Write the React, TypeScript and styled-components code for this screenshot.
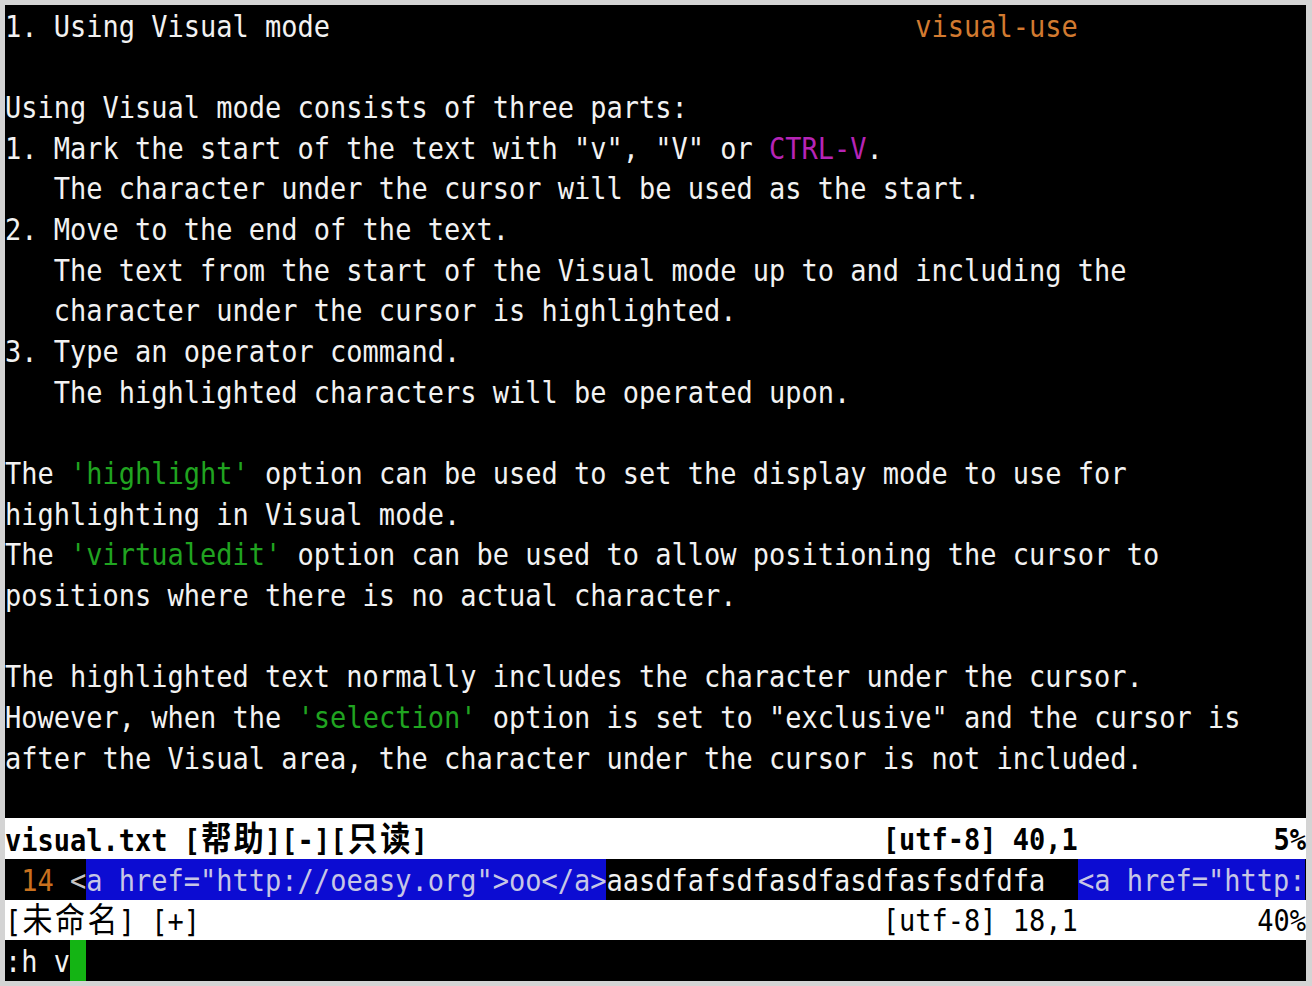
import React from "react";
import styled, { createGlobalStyle } from "styled-components";

type Tone = "plain" | "tag" | "key" | "opt" | "lnr" | "dim" | "vis";
type Seg = [string, Tone?];

const helpLines: Seg[][] = [
  [["1. Using Visual mode".padEnd(56)], ["visual-use", "tag"]],
  [],
  [["Using Visual mode consists of three parts:"]],
  [['1. Mark the start of the text with "v", "V" or '], ["CTRL-V", "key"], ["."]],
  [["   The character under the cursor will be used as the start."]],
  [["2. Move to the end of the text."]],
  [["   The text from the start of the Visual mode up to and including the"]],
  [["   character under the cursor is highlighted."]],
  [["3. Type an operator command."]],
  [["   The highlighted characters will be operated upon."]],
  [],
  [["The "], ["'highlight'", "opt"], [" option can be used to set the display mode to use for"]],
  [["highlighting in Visual mode."]],
  [["The "], ["'virtualedit'", "opt"], [" option can be used to allow positioning the cursor to"]],
  [["positions where there is no actual character."]],
  [],
  [["The highlighted text normally includes the character under the cursor."]],
  [["However, when the "], ["'selection'", "opt"], [' option is set to "exclusive" and the cursor is']],
  [["after the Visual area, the character under the cursor is not included."]],
  [],
];

const editLine: Seg[] = [
  [" 14 ", "lnr"],
  ["<", "dim"],
  ['a href="http://oeasy.org">oo</a>', "vis"],
  ["aasdfafsdfasdfasdfasfsdfdfa  "],
  ['<a href="http:', "vis"],
];

const GlobalStyle = createGlobalStyle`
  html, body {
    margin: 0;
    padding: 0;
    background: #d4d4d4;
  }
`;

const Frame = styled.div`
  width: 1312px;
  height: 986px;
  box-sizing: border-box;
  padding: 5px 6px 5px 5px;
  background: #d4d4d4;
`;

const Screen = styled.div`
  display: grid;
  grid-template-rows: repeat(24, 1fr);
  width: 1301px;
  height: 976px;
  background: #000;
  color: #f2f2f2;
  font-family: "DejaVu Sans Mono", "Noto Sans CJK SC", monospace;
  font-size: 27px;
`;

const Row = styled.div`
  display: flex;
  align-items: center;
  white-space: pre;
  overflow: hidden;
  line-height: 1;
`;

// the terminal cells are taller than the font, so the glyphs are stretched
const Ink = styled.span`
  display: inline-block;
  transform: translateY(1px) scaleY(1.12);
`;

const Text = styled.span<{ $tone?: Tone }>`
  color: ${(p) =>
    ({
      plain: "#f2f2f2",
      tag: "#d27a30",
      key: "#b624b6",
      opt: "#20a420",
      lnr: "#c8701e",
      dim: "#c4c4c4",
      vis: "#c6c6e6",
    })[p.$tone || "plain"]};
  background: ${(p) => (p.$tone === "vis" ? "#0c0cd2" : "transparent")};
  align-self: stretch;
  display: flex;
  align-items: center;
`;

const StatusBar = styled.div<{ $active?: boolean }>`
  display: grid;
  grid-template-columns: 54ch 12ch 1fr;
  align-items: center;
  white-space: pre;
  background: #ffffff;
  color: #000;
  font-weight: ${(p) => (p.$active ? 700 : 400)};
  line-height: 1;
`;

const Cell = styled(Ink)<{ $right?: boolean }>`
  justify-self: ${(p) => (p.$right ? "end" : "start")};
`;

// double-width cell for CJK characters
const Wide = styled.span`
  display: inline-block;
  width: 32.52px;
  font-size: 30px;
  text-align: center;
`;

const Cursor = styled.span`
  align-self: stretch;
  width: 1ch;
  background: #14b414;
`;

const Line = ({ segs }: { segs: Seg[] }) => (
  <Row>
    {segs.map(([t, tone], i) => (
      <Text key={i} $tone={tone}>
        <Ink>{t}</Ink>
      </Text>
    ))}
  </Row>
);

const App = () => (
  <>
    <GlobalStyle />
    <Frame>
      <Screen>
        {helpLines.map((segs, i) => (
          <Line key={i} segs={segs} />
        ))}
        <StatusBar $active>
          <Cell>
            visual.txt [<Wide>帮</Wide>
            <Wide>助</Wide>][-][<Wide>只</Wide>
            <Wide>读</Wide>]
          </Cell>
          <Cell>[utf-8] 40,1</Cell>
          <Cell $right>5%</Cell>
        </StatusBar>
        <Line segs={editLine} />
        <StatusBar>
          <Cell>
            [<Wide>未</Wide>
            <Wide>命</Wide>
            <Wide>名</Wide>] [+]
          </Cell>
          <Cell>[utf-8] 18,1</Cell>
          <Cell $right>40%</Cell>
        </StatusBar>
        <Row>
          <Text>
            <Ink>:h v</Ink>
          </Text>
          <Cursor />
        </Row>
      </Screen>
    </Frame>
  </>
);

export default App;
